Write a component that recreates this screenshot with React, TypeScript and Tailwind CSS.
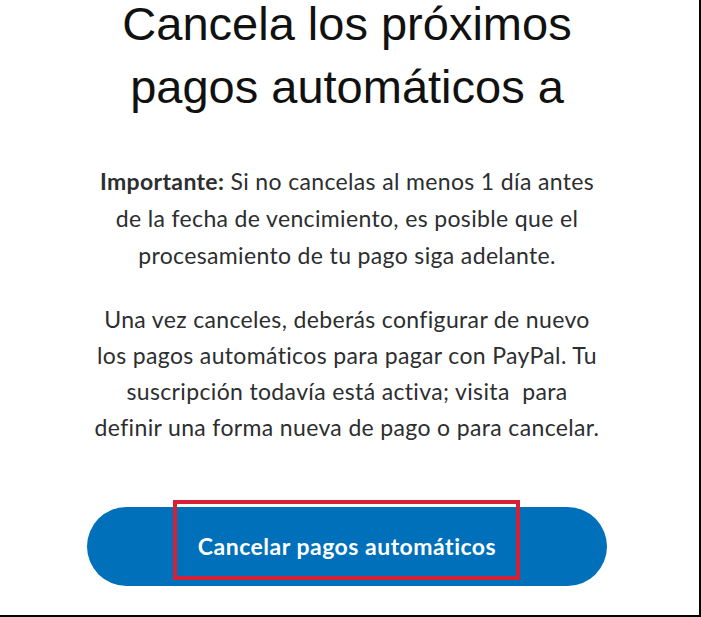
const bodyFont = { fontFamily: 'Lato, "Open Sans", sans-serif' };

export default function App() {
  return (
    <div className="w-[701px] h-[617px] overflow-hidden bg-white border-r-2 border-b-2 border-black pr-[5px] flex flex-col items-center">
      <h1
        className="mt-[-8px] text-center text-[47px] leading-[63px] text-[#111] font-normal whitespace-nowrap"
        style={{ fontFamily: '"Liberation Sans", Arial, sans-serif' }}
      >
        Cancela los próximos
        <br />
        pagos automáticos a
      </h1>

      <div
        className="mt-[45px] text-center text-[23px] leading-[37px] tracking-[0.35px] text-[#2c2e2f] whitespace-nowrap"
        style={bodyFont}
      >
        <p>
          <span className="font-bold">Importante:</span> Si no cancelas al menos 1 día antes
          <br />
          de la fecha de vencimiento, es posible que el
          <br />
          procesamiento de tu pago siga adelante.
        </p>
        <p className="mt-[27px] leading-[36px]">
          Una vez canceles, deberás configurar de nuevo
          <br />
          los pagos automáticos para pagar con PayPal. Tu
          <br />
          suscripción todavía está activa; visita&nbsp; para
          <br />
          definir una forma nueva de pago o para cancelar.
        </p>
      </div>

      <div className="mt-[62px] relative w-[520px] h-[79px] shrink-0 rounded-full bg-[#0070ba] flex items-center justify-center">
        <span className="text-white font-bold text-[23px] tracking-[0.5px]" style={bodyFont}>
          Cancelar pagos automáticos
        </span>
        <div className="absolute left-[86px] top-[-7px] w-[347px] h-[80px] border-[4px] border-[#d62035]" />
      </div>
    </div>
  );
}
